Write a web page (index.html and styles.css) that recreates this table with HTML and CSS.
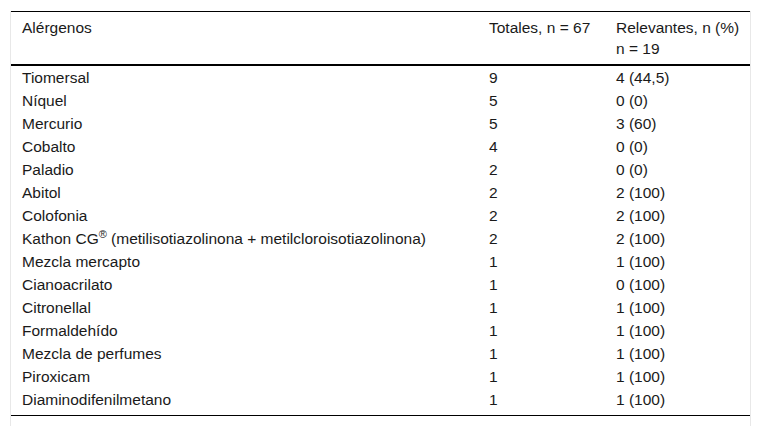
FILE: index.html
```html
<!DOCTYPE html>
<html lang="es">
<head>
<meta charset="utf-8">
<link rel="stylesheet" href="styles.css">
</head>
<body>
<div class="wrap">
<table class="tbl">
<colgroup><col class="c1"><col class="c2"><col class="c3"></colgroup>
<thead>
<tr><th>Alérgenos</th><th>Totales, n = 67</th><th>Relevantes, n (%)<br>n = 19</th></tr>
</thead>
<tbody>
<tr><td>Tiomersal</td><td>9</td><td>4 (44,5)</td></tr>
<tr><td>Níquel</td><td>5</td><td>0 (0)</td></tr>
<tr><td>Mercurio</td><td>5</td><td>3 (60)</td></tr>
<tr><td>Cobalto</td><td>4</td><td>0 (0)</td></tr>
<tr><td>Paladio</td><td>2</td><td>0 (0)</td></tr>
<tr><td>Abitol</td><td>2</td><td>2 (100)</td></tr>
<tr><td>Colofonia</td><td>2</td><td>2 (100)</td></tr>
<tr><td>Kathon CG<sup>®</sup> (metilisotiazolinona + metilcloroisotiazolinona)</td><td>2</td><td>2 (100)</td></tr>
<tr><td>Mezcla mercapto</td><td>1</td><td>1 (100)</td></tr>
<tr><td>Cianoacrilato</td><td>1</td><td>0 (100)</td></tr>
<tr><td>Citronellal</td><td>1</td><td>1 (100)</td></tr>
<tr><td>Formaldehído</td><td>1</td><td>1 (100)</td></tr>
<tr><td>Mezcla de perfumes</td><td>1</td><td>1 (100)</td></tr>
<tr><td>Piroxicam</td><td>1</td><td>1 (100)</td></tr>
<tr class="last"><td>Diaminodifenilmetano</td><td>1</td><td>1 (100)</td></tr>
</tbody>
</table>
</div>
</body>
</html>
```
FILE: styles.css
```css
html, body {
  margin: 0;
  padding: 0;
  background: #fff;
}
body {
  font-family: "Liberation Sans", Arial, sans-serif;
  font-size: 15.5px;
  color: #1a1a1a;
}
.wrap {
  margin: 11px 0 0 10px;
  width: 739px;
  border-left: 1px solid #e8e8e8;
  border-right: 1px solid #e8e8e8;
  padding-bottom: 10px;
}
.tbl {
  width: 739px;
  table-layout: fixed;
  border-collapse: collapse;
  border-top: 1px solid #000;
  border-bottom: 1px solid #000;
}
.c1 { width: 467px; }
.c2 { width: 127px; }
.c3 { width: 145px; }
.tbl th {
  font-weight: normal;
  text-align: left;
  vertical-align: top;
  padding: 5px 0 5px 11px;
  line-height: 21px;
  white-space: nowrap;
  border-bottom: 2px solid #000;
}
.tbl td {
  padding: 1px 0 1px 11px;
  line-height: 21px;
  vertical-align: top;
  white-space: nowrap;
}
.tbl .last td {
  padding-bottom: 5px;
}
.tbl sup {
  font-size: 11px;
  line-height: 0;
  vertical-align: 6px;
}
```
